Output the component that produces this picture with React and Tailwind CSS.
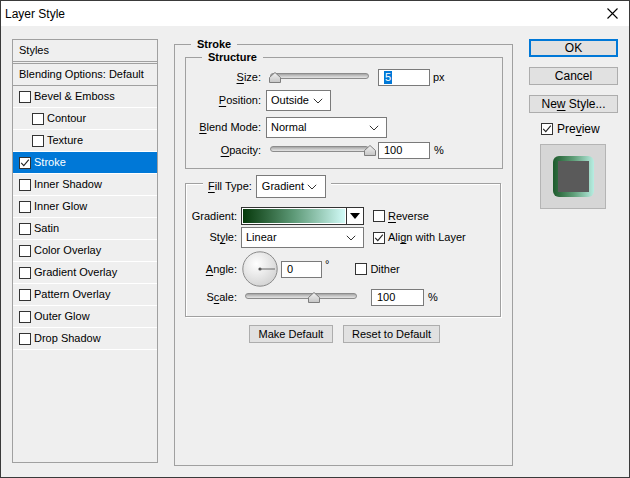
import React from 'react';

const font = { fontFamily: '"Liberation Sans", Arial, sans-serif' };

const Check = ({ checked }) => (
    <span className="w-[12px] h-[12px] shrink-0 border border-[#333] bg-white flex items-center justify-center">
        {checked && (
            <svg width="10" height="10" viewBox="0 0 10 10">
                <path d="M1.2 4.8 L3.8 7.6 L8.8 1.6" stroke="#222" strokeWidth="1.1" fill="none" />
            </svg>
        )}
    </span>
);

const Chevron = () => (
    <svg width="10" height="6" viewBox="0 0 10 6">
        <polyline points="0.8,0.8 5,5 9.2,0.8" stroke="#333" strokeWidth="1" fill="none" />
    </svg>
);

const Thumb = ({ className }) => (
    <svg className={`absolute top-0 ${className}`} width="12" height="11" viewBox="0 0 12 11">
        <defs>
            <linearGradient id="thumbg" x1="0" y1="0" x2="0" y2="1">
                <stop offset="0" stopColor="#f4f4f4" />
                <stop offset="1" stopColor="#c4c4c4" />
            </linearGradient>
        </defs>
        <path d="M0.5 10.5 L0.5 5.5 L6 0.5 L11.5 5.5 L11.5 10.5 Z" fill="url(#thumbg)" stroke="#7e7e7e" />
    </svg>
);

const Track = () => (
    <div className="mt-[1px] h-[6px] rounded-full border border-[#8c8c8c] bg-gradient-to-b from-[#a4a4a4] via-[#c8c8c8] to-[#e4e4e4]" />
);

const Field = ({ className, children }) => (
    <div className={`h-[17px] border border-[#7a7a7a] bg-white flex items-center pl-[5px] ${className}`}>
        {children}
    </div>
);

const Select = ({ className, children }) => (
    <div className={`h-[21px] border border-[#7a7a7a] bg-white flex items-center justify-between pl-[4px] pr-[7px] ${className}`}>
        <span>{children}</span>
        <Chevron />
    </div>
);

const U = ({ children }) => <span className="underline underline-offset-[2px]">{children}</span>;

const styleRows = [
    { label: 'Bevel & Emboss' },
    { label: 'Contour', sub: true },
    { label: 'Texture', sub: true },
    { label: 'Stroke', checked: true, selected: true },
    { label: 'Inner Shadow' },
    { label: 'Inner Glow' },
    { label: 'Satin' },
    { label: 'Color Overlay' },
    { label: 'Gradient Overlay' },
    { label: 'Pattern Overlay' },
    { label: 'Outer Glow' },
    { label: 'Drop Shadow' },
];

const StylesList = () => (
    <div className="ml-[11px] mt-[13px] w-[146px] h-[424px] border border-[#a0a0a0] flex flex-col">
        <div className="h-[22px] border-b border-[#a0a0a0] flex items-center pl-[6px]">Styles</div>
        <div className="mt-[1px] h-[23px] border-y border-[#a0a0a0] flex items-center pl-[6px]">Blending Options: Default</div>
        {styleRows.map((row) => (
            <div
                key={row.label}
                className={`h-[22px] border-b border-white flex items-center gap-[3px] ${row.sub ? 'pl-[19px]' : 'pl-[6px]'} ${row.selected ? 'bg-[#0078d7] text-white' : ''}`}
            >
                <Check checked={row.checked} />
                <span>{row.label}</span>
            </div>
        ))}
    </div>
);

const Structure = () => (
    <div className="ml-[10px] mt-[6px] w-[318px] h-[112px] border border-[#a0a0a0] flex flex-col">
        <div className="-mt-[7px] ml-[16px] self-start px-[6px] bg-[#efefef] font-bold leading-[13px]">Structure</div>

        <div className="mt-[5px] h-[17px] flex items-center">
            <span className="w-[75px] text-right"><U>S</U>ize:</span>
            <div className="relative ml-[9px] w-[99px] h-[11px]">
                <Track />
                <Thumb className="left-[-1px]" />
            </div>
            <Field className="ml-[9px] w-[52px]">
                <span className="bg-[#0078d7] text-white px-[1px] leading-[13px]">5</span>
            </Field>
            <span className="ml-[3px]">px</span>
        </div>

        <div className="mt-[4px] flex items-center">
            <span className="w-[75px] text-right"><U>P</U>osition:</span>
            <Select className="ml-[5px] w-[65px]">Outside</Select>
        </div>

        <div className="mt-[6px] flex items-center">
            <span className="w-[75px] text-right"><U>B</U>lend Mode:</span>
            <Select className="ml-[5px] w-[121px]">Normal</Select>
        </div>

        <div className="mt-[4px] h-[17px] flex items-center">
            <span className="w-[75px] text-right"><U>O</U>pacity:</span>
            <div className="relative ml-[9px] w-[99px] h-[11px]">
                <Track />
                <Thumb className="left-[94px]" />
            </div>
            <Field className="ml-[9px] w-[52px]">100</Field>
            <span className="ml-[4px]">%</span>
        </div>
    </div>
);

const AngleDial = () => (
    <svg width="36" height="36" viewBox="0 0 36 36">
        <defs>
            <radialGradient id="dialg" cx="0.4" cy="0.35" r="0.7">
                <stop offset="0" stopColor="#ffffff" />
                <stop offset="1" stopColor="#d2d2d2" />
            </radialGradient>
        </defs>
        <circle cx="18" cy="18" r="17.2" fill="url(#dialg)" stroke="#8a8a8a" strokeWidth="1" />
        <circle cx="18" cy="18" r="1.6" fill="#555" />
        <line x1="18" y1="18" x2="33" y2="18" stroke="#666" strokeWidth="1" />
    </svg>
);

const FillType = () => (
    <div className="ml-[10px] mt-[14px] w-[316px] h-[134px] border border-[#a0a0a0] shadow-[1px_1px_0_#ffffff,inset_1px_1px_0_#ffffff] flex flex-col">
        <div className="-mt-[9px] ml-[17px] self-start px-[5px] bg-[#efefef] flex items-center gap-[4px]">
            <span><U>F</U>ill Type:</span>
            <div className="h-[23px] w-[70px] border border-[#7a7a7a] bg-white flex items-center justify-between pl-[5px] pr-[8px]">
                <span>Gradient</span>
                <Chevron />
            </div>
        </div>

        <div className="mt-[9px] h-[18px] flex items-center">
            <span className="w-[51px] text-right">Gradient:</span>
            <div className="ml-[4px] w-[123px] h-[18px] border border-[#333] bg-white flex">
                <div className="flex-1 m-[1px] bg-gradient-to-r from-[#053a0a] via-[#5e9a78] to-[#d2fbf8]" />
                <div className="w-[17px] border-l border-[#333] flex items-center justify-center">
                    <svg width="10" height="6" viewBox="0 0 10 6">
                        <path d="M0 0 H10 L5 6 Z" fill="#000" />
                    </svg>
                </div>
            </div>
            <div className="ml-[9px] flex items-center gap-[3px]">
                <Check />
                <span><U>R</U>everse</span>
            </div>
        </div>

        <div className="mt-[2px] flex items-center">
            <span className="w-[51px] text-right">St<U>y</U>le:</span>
            <Select className="ml-[4px] w-[123px]">Linear</Select>
            <div className="ml-[9px] flex items-center gap-[3px]">
                <Check checked />
                <span>Ali<U>g</U>n with Layer</span>
            </div>
        </div>

        <div className="mt-[3px] h-[36px] flex items-center">
            <span className="w-[51px] text-right"><U>A</U>ngle:</span>
            <div className="ml-[5px]">
                <AngleDial />
            </div>
            <Field className="ml-[3px] w-[41px]">0</Field>
            <span className="ml-[3px] self-start mt-[7px] leading-[12px]">°</span>
            <div className="ml-[26px] flex items-center gap-[3px]">
                <Check />
                <span>Dither</span>
            </div>
        </div>

        <div className="mt-[2px] h-[17px] flex items-center">
            <span className="w-[51px] text-right">S<U>c</U>ale:</span>
            <div className="relative ml-[8px] w-[112px] h-[11px]">
                <Track />
                <Thumb className="left-[63px]" />
            </div>
            <Field className="ml-[14px] w-[53px]">100</Field>
            <span className="ml-[4px]">%</span>
        </div>
    </div>
);

const Btn = ({ className, children }) => (
    <div className={`h-[18px] border border-[#adadad] bg-[#e1e1e1] flex items-center justify-center ${className}`}>
        <span>{children}</span>
    </div>
);

const StrokePanel = () => (
    <div className="ml-[16px] mt-[18px] w-[339px] h-[422px] border border-[#a0a0a0] flex flex-col">
        <div className="-mt-[7px] ml-[16px] self-start px-[6px] bg-[#efefef] font-bold leading-[13px]">Stroke</div>
        <Structure />
        <FillType />
        <div className="mt-[8px] ml-[74px] flex gap-[10px]">
            <Btn className="w-[84px]">Make Default</Btn>
            <Btn className="w-[97px]">Reset to Default</Btn>
        </div>
    </div>
);

const RightColumn = () => (
    <div className="ml-[16px] mt-[13px] w-[89px] flex flex-col text-[12px]">
        <div className="h-[18px] border-2 border-[#0078d7] bg-[#e1e1e1] flex items-center justify-center">OK</div>
        <Btn className="mt-[10px]">Cancel</Btn>
        <Btn className="mt-[10px]">Ne<U>w</U> Style...</Btn>
        <div className="mt-[7px] ml-[12px] flex items-center gap-[4px]">
            <Check checked />
            <span>Pre<U>v</U>iew</span>
        </div>
        <div className="mt-[6px] ml-[11px] w-[66px] h-[65px] border border-[#b4b4b4] bg-[#d6d6d6] flex items-center justify-center">
            <div className="w-[41px] h-[41px] rounded-[6px] bg-gradient-to-r from-[#1d5a2c] via-[#5f9e78] to-[#b8ede2] p-[5px]">
                <div className="w-full h-full bg-[#5a5a5a]" />
            </div>
        </div>
    </div>
);

export default function App() {
    return (
        <div className="w-[630px] h-[478px] border border-[#3a3a3a] bg-[#efefef] text-[11px] text-black flex flex-col overflow-hidden" style={font}>
            <div className="h-[25px] bg-white flex items-center justify-between pl-[4px] pr-[11px] shrink-0">
                <span className="text-[12px]">Layer Style</span>
                <svg width="11" height="11" viewBox="0 0 11 11">
                    <path d="M0.5 0.5 L10.5 10.5 M10.5 0.5 L0.5 10.5" stroke="#000" strokeWidth="1.1" />
                </svg>
            </div>
            <div className="flex items-start">
                <StylesList />
                <StrokePanel />
                <RightColumn />
            </div>
        </div>
    );
}
